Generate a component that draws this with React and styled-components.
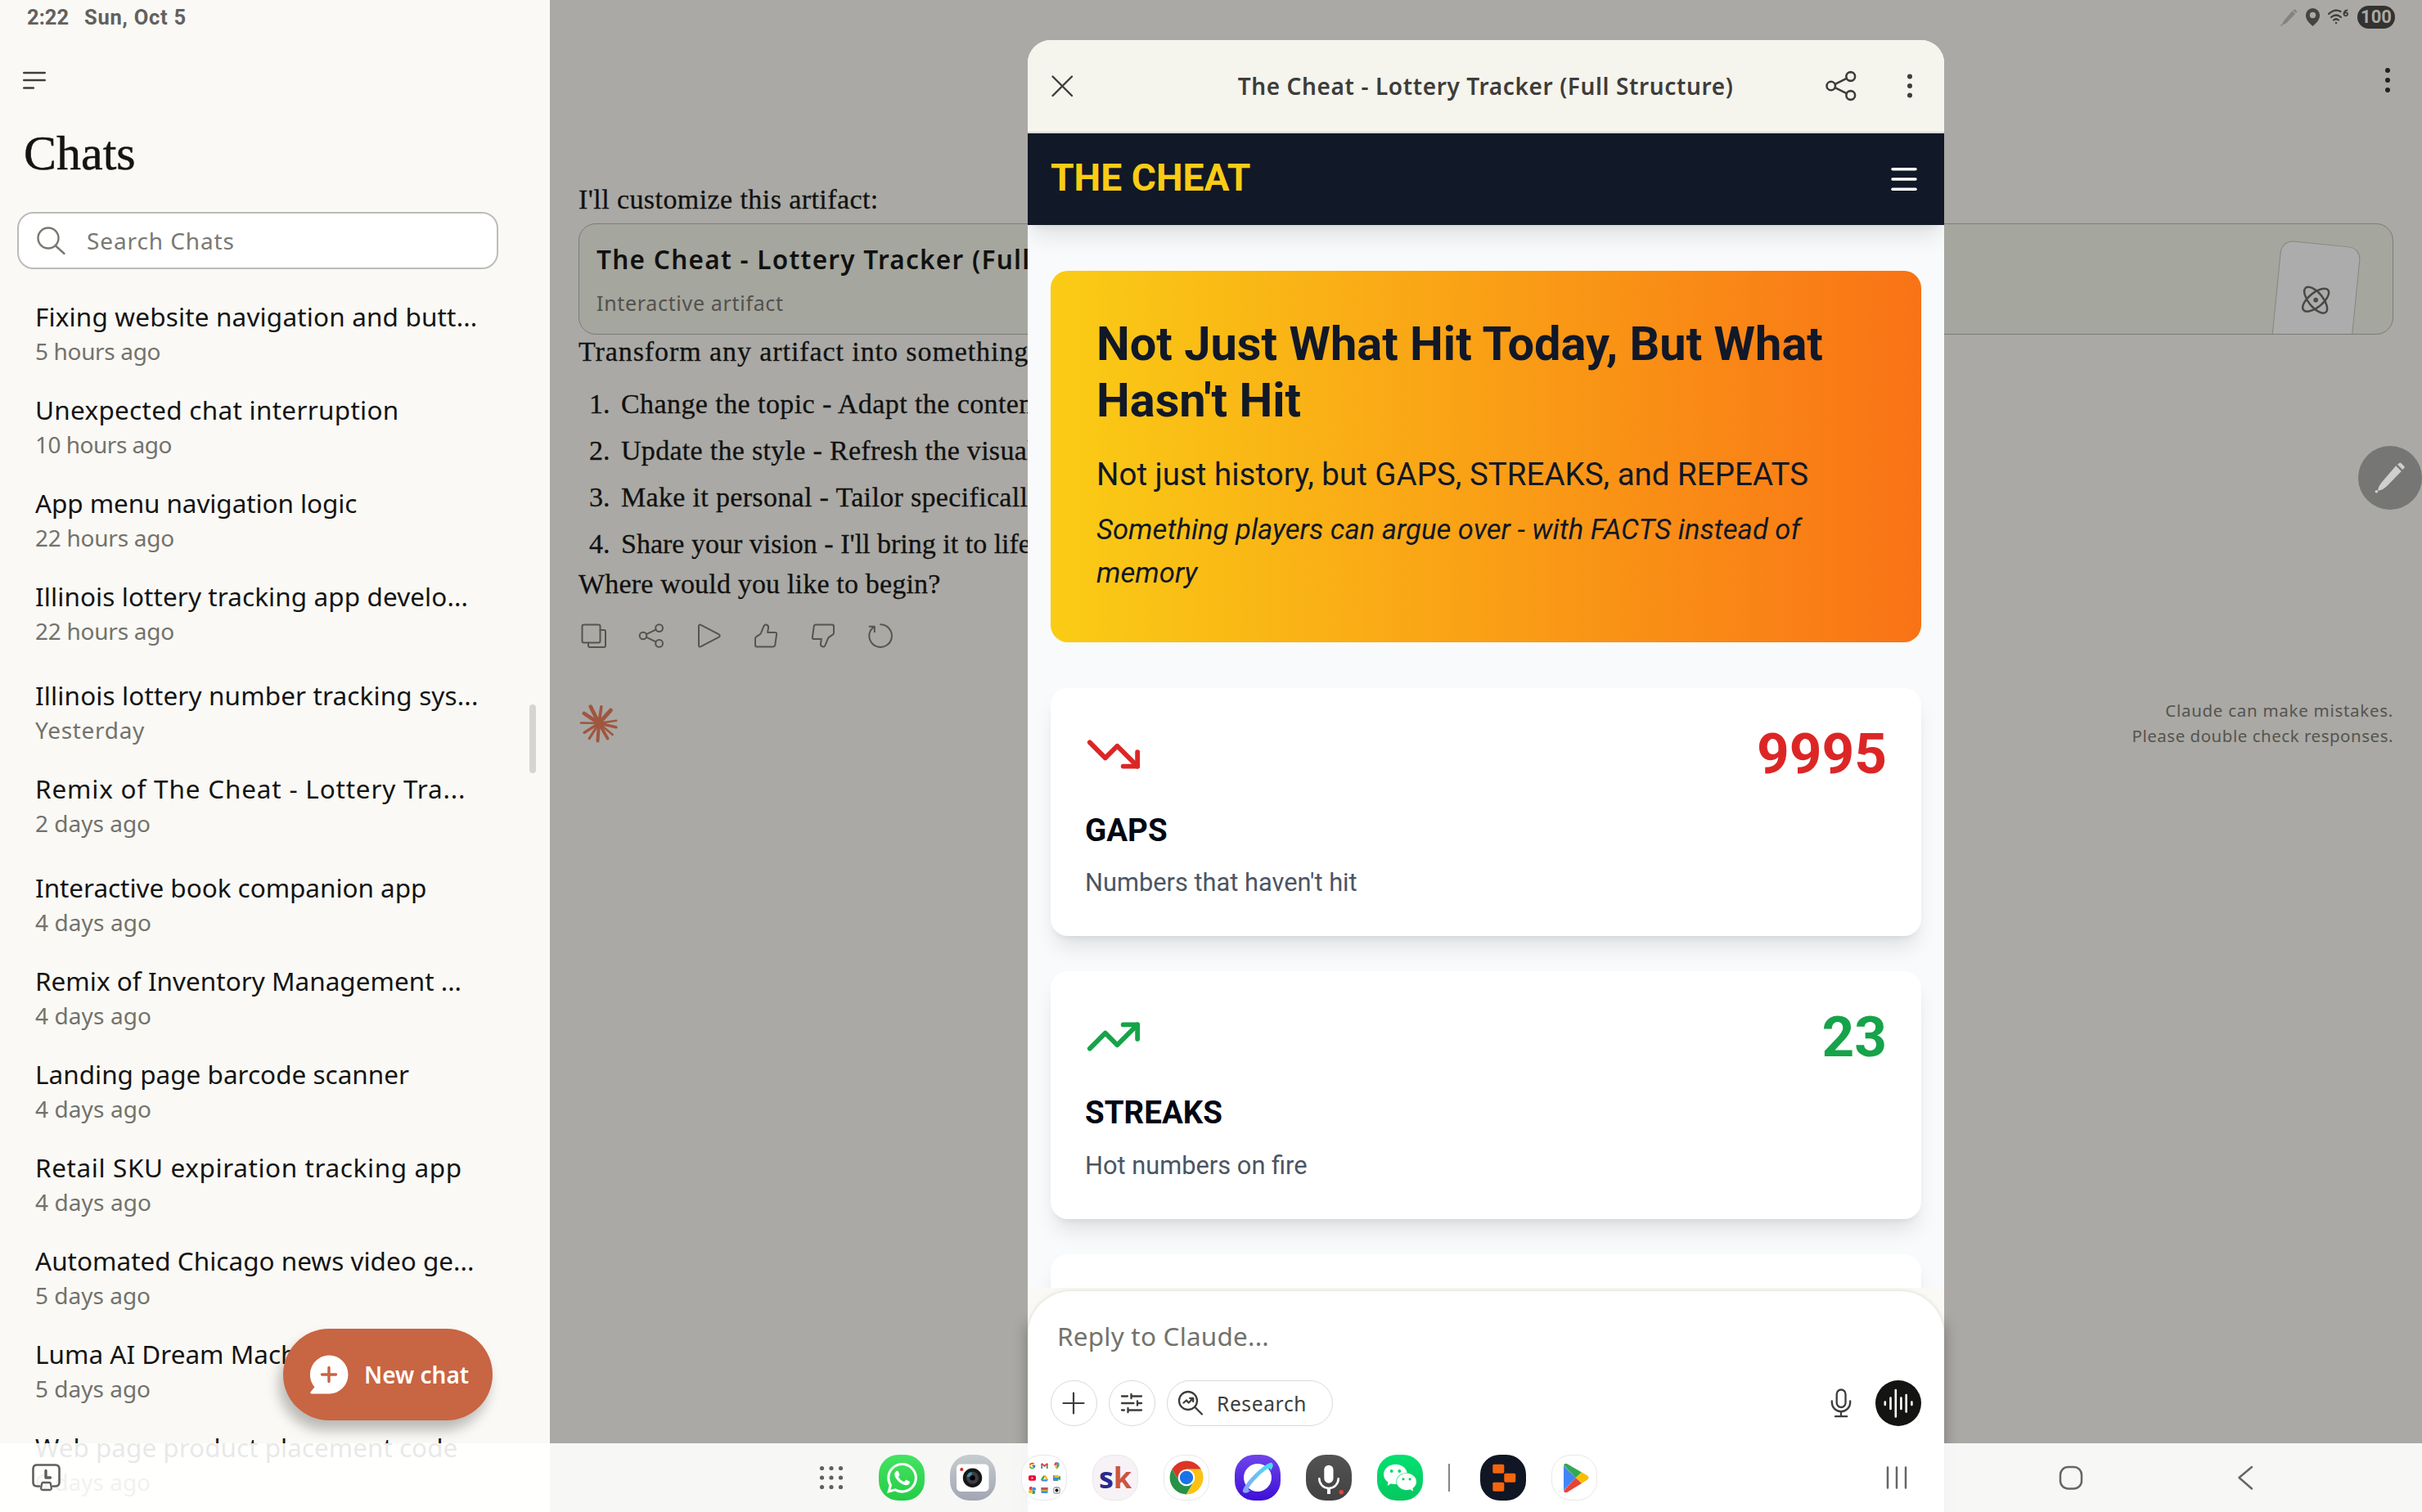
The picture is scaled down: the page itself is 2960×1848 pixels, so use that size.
import React from "react";
import styled, { createGlobalStyle, css } from "styled-components";
import { Menu, TrendingDown, TrendingUp, Atom } from "lucide-react";
import { SiWhatsapp, SiWechat } from "react-icons/si";
import { FcGoogle } from "react-icons/fc";

const sans = `"Noto Sans", "Open Sans", sans-serif`;
const serif = `"Liberation Serif", serif`;
const roboto = `Roboto, sans-serif`;

const GlobalStyle = createGlobalStyle`
  * { box-sizing: border-box; }
  body { margin: 0; background: #aaa9a5; }
  p, h1, h2, h3, ol { margin: 0; padding: 0; font-weight: inherit; }
  svg { display: block; flex: none; }
`;

const tracked = css`
  letter-spacing: ${(p) => p.$track || 0}px;
`;

const Screen = styled.div`
  position: relative;
  display: flex;
  width: 2960px;
  height: 1848px;
  overflow: hidden;
  font-family: ${sans};
  white-space: nowrap;
`;

/* ---------- status bar ---------- */
const StatusBar = styled.div`
  position: absolute;
  inset: 0 0 auto 0;
  height: 42px;
  display: flex;
  align-items: center;
  padding: 0 33px;
`;
const Clock = styled.span`
  font: 700 25.5px/42px ${roboto};
  color: #62615e;
  margin-right: 19px;
  ${tracked}
`;
const StatusIcons = styled.div`
  margin-left: auto;
  display: flex;
  align-items: center;
  gap: 10px;
`;
const Battery = styled.span`
  width: 46px;
  height: 28px;
  border-radius: 14px;
  background: #333230;
  color: #aaa9a5;
  font: 700 22px/28px ${roboto};
  text-align: center;
`;

/* ---------- sidebar ---------- */
const Sidebar = styled.aside`
  position: relative;
  width: 672px;
  height: 1848px;
  padding: 80px 0 0 21px;
  background: #faf9f5;
  overflow: hidden;
  flex: none;
`;
const MenuButton = styled.div`
  height: 36px;
  padding-left: 6px;
`;
const SidebarTitle = styled.h1`
  margin: 36px 0 37px 8px;
  font: 400 60px/70px ${serif};
  color: #141413;
  -webkit-text-stroke: 0.5px #141413;
`;
const SearchBox = styled.div`
  display: flex;
  align-items: center;
  width: 588px;
  height: 70px;
  padding-left: 22px;
  border: 2px solid #bdbcba;
  border-radius: 20px;
  background: #fff;
  color: #7a7872;
  font-size: 28px;
  letter-spacing: 0.9px;
  gap: 25px;
`;
const ChatList = styled.div`
  margin: 36px 0 0 22px;
`;
const ChatRow = styled.div`
  height: 114px;
  margin-bottom: ${(p) => (p.$gap ? 7 : 0)}px;
`;
const ChatName = styled.div`
  font-size: 31.5px;
  line-height: 44px;
  color: #141413;
  ${tracked}
`;
const ChatTime = styled.div`
  margin-top: 2px;
  font-size: 28px;
  line-height: 36px;
  color: #73726c;
  ${tracked}
`;
const ScrollThumb = styled.div`
  position: absolute;
  right: 17px;
  top: 861px;
  width: 8px;
  height: 84px;
  border-radius: 4px;
  background: #d5d5d2;
`;
const NewChat = styled.div`
  position: absolute;
  left: 346px;
  top: 1624px;
  width: 256px;
  height: 112px;
  border-radius: 56px;
  display: flex;
  align-items: center;
  padding-left: 31px;
  gap: 18px;
  background: #c86543;
  box-shadow: -5px 12px 16px rgba(0, 0, 0, 0.26);
  color: #fff;
  font-size: 28px;
  font-weight: 600;
`;

/* ---------- conversation ---------- */
const Conversation = styled.main`
  width: 2288px;
  height: 1848px;
  padding: 219px 35px 0 35px;
  background: #aaa9a5;
  color: #111110;
  font: 400 34px/44px ${serif};
  -webkit-text-stroke: 0.3px currentColor;
`;
const Paragraph = styled.p`
  line-height: ${(p) => p.$line || 44}px;
  ${tracked}
`;
const ArtifactCard = styled.div`
  display: flex;
  justify-content: space-between;
  height: 136px;
  margin: 3.5px 0 -1px;
  padding: 0 38px 0 21px;
  border: 1.5px solid #7c7c77;
  border-radius: 21px;
  background: #a5a69e;
  overflow: hidden;
  font-family: ${sans};
  -webkit-text-stroke: 0;
`;
const ArtifactText = styled.div`
  padding-top: 21.5px;
`;
const ArtifactName = styled.div`
  font-size: 31.5px;
  line-height: 44px;
  font-weight: 600;
  letter-spacing: 1.28px;
`;
const ArtifactKind = styled.div`
  margin-top: 14px;
  font-size: 25px;
  line-height: 34px;
  color: #52514c;
  letter-spacing: 0.68px;
`;
const ArtifactThumb = styled.div`
  display: flex;
  justify-content: center;
  width: 98px;
  height: 150px;
  margin-top: 24px;
  padding-top: 48px;
  border: 1.5px solid #85857f;
  border-radius: 15px;
  background: #acacac;
  color: #4a4945;
  transform: rotate(5.7deg);
  transform-origin: top center;
`;
const Steps = styled.ol`
  margin-top: 13px;
  list-style: none;
`;
const Step = styled.li`
  display: flex;
  line-height: 57.1px;
`;
const StepNumber = styled.span`
  width: 39px;
  margin-left: 13px;
`;
const StepText = styled.span`
  ${tracked}
`;
const Closing = styled(Paragraph)`
  padding-top: 1px;
`;
const Actions = styled.div`
  display: flex;
  gap: 34px;
  margin: 25.5px 0 0 0.5px;
  height: 36px;
`;
const FooterRow = styled.div`
  display: flex;
  justify-content: space-between;
  align-items: center;
  margin-top: 58px;
`;
const Disclaimer = styled.div`
  font: 400 20.5px/30.5px ${sans};
  color: #55544f;
  text-align: right;
  -webkit-text-stroke: 0;
`;
const DisclaimerLine = styled.div`
  ${tracked}
`;
const MoreDots = styled.div`
  position: absolute;
  left: 2902px;
  top: 80px;
`;
const PenBubble = styled.div`
  position: absolute;
  left: 2882px;
  top: 545px;
  width: 78px;
  height: 78px;
  border-radius: 50%;
  background: #767674;
  display: flex;
  align-items: center;
  justify-content: center;
`;

/* ---------- artifact sheet ---------- */
const Sheet = styled.section`
  position: absolute;
  left: 1256px;
  top: 49px;
  width: 1120px;
  height: 1799px;
  display: flex;
  flex-direction: column;
  border-radius: 28px 28px 0 0;
  overflow: hidden;
  background: #fff;
`;
const SheetShade = styled.div`
  position: absolute;
  left: 1256px;
  top: 1620px;
  width: 1120px;
  height: 300px;
  box-shadow: 0 0 16px 2px rgba(0, 0, 0, 0.24);
`;
const SheetHeader = styled.header`
  display: flex;
  align-items: center;
  height: 114px;
  padding: 0 26px 0 25px;
  background: #f5f4ed;
  border-bottom: 2px solid #d9dadb;
  flex: none;
`;
const SheetTitle = styled.h2`
  flex: 1;
  padding-left: 88px;
  text-align: center;
  font-size: 28px;
  font-weight: 600;
  line-height: 40px;
  letter-spacing: 0.62px;
  color: #3d3d3a;
`;
const SheetActions = styled.div`
  display: flex;
  align-items: center;
  gap: 46px;
`;
const WebView = styled.div`
  height: 1411px;
  background: #f9fafb;
  overflow: hidden;
  font-family: ${roboto};
  flex: none;
`;
const NavBar = styled.nav`
  position: relative;
  display: flex;
  align-items: center;
  justify-content: space-between;
  height: 112px;
  padding: 0 28px;
  background: #111827;
  color: #fff;
  box-shadow: 0 17.5px 26px -5px rgba(0, 0, 0, 0.1), 0 7px 10.5px -7px rgba(0, 0, 0, 0.1);
`;
const Brand = styled.span`
  font-size: 46.2px;
  font-weight: 700;
  line-height: 61px;
  padding-bottom: 3px;
  color: #facc15;
`;
const PageBody = styled.div`
  padding: 56px 28px;
`;
const Hero = styled.div`
  padding: 55px 56px 56.5px;
  border-radius: 21px;
  background: linear-gradient(to right, #facc15, #f97316);
  color: #111827;
  white-space: normal;
`;
const HeroTitle = styled.h1`
  font-size: 57.75px;
  line-height: 69.3px;
  font-weight: 700;
  margin-bottom: 28px;
`;
const HeroLead = styled.p`
  font-size: 38.5px;
  line-height: 53.9px;
  margin-bottom: 14px;
`;
const HeroNote = styled.p`
  font-size: 34.65px;
  line-height: 53.9px;
  font-style: italic;
`;
const StatGrid = styled.div`
  display: grid;
  gap: 42.5px;
  margin-top: 56.5px;
`;
const StatCard = styled.div`
  height: 303.1px;
  padding: 42px;
  border-radius: 21px;
  background: #fff;
  box-shadow: 0 17.5px 26px -5px rgba(0, 0, 0, 0.1), 0 7px 10.5px -7px rgba(0, 0, 0, 0.1);
`;
const StatTop = styled.div`
  display: flex;
  align-items: center;
  justify-content: space-between;
  margin-bottom: 27.5px;
  color: ${(p) => p.$color};
`;
const StatValue = styled.span`
  font-size: 69.3px;
  line-height: 77px;
  font-weight: 700;
`;
const StatName = styled.h3`
  font-size: 38.5px;
  line-height: 53.9px;
  font-weight: 700;
  color: #030712;
  margin-bottom: 14.5px;
`;
const StatNote = styled.p`
  font-size: 30.8px;
  line-height: 46.2px;
  color: #4b5563;
`;
const ComposerArea = styled.div`
  flex: 1;
  padding-top: 4px;
  background: #faf9f5;
`;
const Composer = styled.div`
  height: 100%;
  padding: 33px 28px 0;
  border-radius: 54px 54px 0 0;
  background: #fff;
  box-shadow: 0 0 5px rgba(90, 80, 50, 0.22);
`;
const Placeholder = styled.div`
  padding-left: 8px;
  margin-bottom: 32px;
  font-size: 31.5px;
  line-height: 44px;
  letter-spacing: 0.2px;
  color: #73726c;
`;
const ComposerTools = styled.div`
  display: flex;
  align-items: center;
  gap: 14.5px;
`;
const ToolButton = styled.div`
  display: flex;
  align-items: center;
  justify-content: ${(p) => (p.$wide ? "flex-start" : "center")};
  width: ${(p) => (p.$wide ? 203 : 56.5)}px;
  height: 56px;
  padding-left: ${(p) => (p.$wide ? 12 : 0)}px;
  gap: 16px;
  border: 1.3px solid #d9d9d7;
  border-radius: 28px;
  font-size: 24.5px;
  letter-spacing: 0.65px;
  color: #3d3d3a;
`;
const VoiceGroup = styled.div`
  margin-left: auto;
  display: flex;
  align-items: center;
  gap: 26px;
`;
const VoiceButton = styled.div`
  width: 56px;
  height: 56px;
  border-radius: 50%;
  background: #141413;
`;

/* ---------- taskbar ---------- */
const Taskbar = styled.div`
  position: absolute;
  inset: 1764px 0 auto 0;
  height: 84px;
  display: flex;
  align-items: center;
  padding-left: 38px;
  background: rgba(255, 255, 255, 0.9);
`;
const Dock = styled.div`
  display: flex;
  align-items: center;
  gap: 31px;
  width: 955px;
  margin-left: 924px;
`;
const DotsSlot = styled.div`
  width: 32px;
  margin-right: 11px;
`;
const DockDivider = styled.div`
  width: 2px;
  height: 34px;
  margin-right: 6px;
  background: #858585;
`;
const AppTile = styled.div`
  display: flex;
  align-items: center;
  justify-content: center;
  width: 56px;
  height: 56px;
  border-radius: 24px;
  background: ${(p) => p.$bg};
  color: #fff;
  overflow: hidden;
  flex: none;
  ${(p) =>
    p.$outlined &&
    css`
      border: 1px solid #e8e8ea;
    `}
`;
const FolderGrid = styled.div`
  display: grid;
  grid-template-columns: repeat(3, 9px);
  gap: 6px;
`;
const Sk = styled.span`
  font: 700 36px/56px "Open Sans", sans-serif;
  color: ${(p) => p.$color};
`;
const NavKeys = styled.div`
  display: flex;
  align-items: center;
  gap: 177px;
  margin-left: 345px;
  flex: none;
`;

/* ---------- icons ---------- */
const Stroke = ({ w, h = w, sw = 2, color = "currentColor", vb, children }) => (
  <svg width={w} height={h} viewBox={vb || `0 0 ${w} ${h}`} fill="none" stroke={color} strokeWidth={sw} strokeLinecap="round" strokeLinejoin="round">
    {children}
  </svg>
);
const VDots = ({ color, r = 3.2, gap = 12 }) => (
  <svg width="32" height="36" viewBox="0 0 32 36" fill={color}>
    <circle cx="16" cy={18 - gap} r={r} />
    <circle cx="16" cy="18" r={r} />
    <circle cx="16" cy={18 + gap} r={r} />
  </svg>
);
const ShareIcon = ({ size = 36, sw = 2, color }) => (
  <Stroke w={size} vb="0 0 36 36" sw={sw} color={color}>
    <circle cx="8" cy="18" r="4.3" />
    <circle cx="27.6" cy="8.6" r="4.4" />
    <circle cx="27.6" cy="27.4" r="4.4" />
    <path d="M12 16.2l11.5-5.6M12 19.8l11.5 5.6" />
  </Stroke>
);
const Thumb = ({ down }) => (
  <Stroke w={36} color="#55544f">
    <path
      transform={down ? "rotate(180 18 18)" : undefined}
      d="M5 21.5q0-1.5 1.2-2.2l4.4-2.9q1-.7 1.5-1.8l3.1-7.8q1-2.6 3.2-2.2 3.2.7 2.6 4l-.9 5.3h9q2.3 0 2 2.3l-1.8 13q-.3 2.2-2.5 2.2H7.2Q5 31.4 5 29.2z"
    />
  </Stroke>
);
const PenIcon = ({ w, color }) => (
  <svg width={w} height={w} viewBox="0 0 40 40" fill={color}>
    <path d="M27.5 4.5l7 7L15 31.5q-4 3.8-9.5 5-1.5 0-1.2-1.3 1.5-5.5 4.7-9.2z" />
    <path d="M29.5 3l2.3-2q1.2-1 2.5.2l3.7 3.7q1.2 1.2.2 2.4L36 9.6z" />
    <circle cx="2.5" cy="37.7" r="1.9" />
  </svg>
);
const Burst = () => {
  const rays = [
    [-10.7, -21.2, 4.6], [3, -21, 3.6], [15, -16.5, 5], [22, -3.3, 2.6], [22, 5, 3.4], [17.4, 14.6, 2.6],
    [11, 19.4, 3.8], [-1.6, 22.4, 4], [-12.3, 19.4, 3], [-18.6, 11.8, 3.4], [-23, -0.5, 2.4], [-19, -12.6, 4.6],
  ];
  return (
    <svg width="50" height="50" viewBox="-25 -25 50 50" stroke="#a0563f" strokeLinecap="round">
      {rays.map(([x, y, s]) => (
        <line key={`${x}:${y}`} x1="0" y1="0" x2={x * 0.96} y2={y * 0.96} strokeWidth={s} />
      ))}
    </svg>
  );
};

const chats = [
  { name: "Fixing website navigation and butt...", time: "5 hours ago", track: 0.15, timeTrack: -0.35 },
  { name: "Unexpected chat interruption", time: "10 hours ago", track: 0.28, timeTrack: -0.5 },
  { name: "App menu navigation logic", time: "22 hours ago", track: -0.1, timeTrack: -0.25 },
  { name: "Illinois lottery tracking app develo...", time: "22 hours ago", track: 0.08, timeTrack: -0.25, gap: true },
  { name: "Illinois lottery number tracking sys...", time: "Yesterday", track: 0.12, timeTrack: 0.7 },
  { name: "Remix of The Cheat - Lottery Tra...", time: "2 days ago", track: 0.8, gap: true },
  { name: "Interactive book companion app", time: "4 days ago", track: -0.05, timeTrack: 0.1 },
  { name: "Remix of Inventory Management ...", time: "4 days ago", timeTrack: 0.1 },
  { name: "Landing page barcode scanner", time: "4 days ago", timeTrack: 0.1 },
  { name: "Retail SKU expiration tracking app", time: "4 days ago", track: 0.6, timeTrack: 0.1 },
  { name: "Automated Chicago news video ge...", time: "5 days ago" },
  { name: "Luma AI Dream Machine", time: "5 days ago" },
  { name: "Web page product placement code", time: "6 days ago" },
];
const steps = [
  { text: "Change the topic - Adapt the content for your needs", track: 0.42 },
  { text: "Update the style - Refresh the visuals and feel", track: 0.3 },
  { text: "Make it personal - Tailor specifically for you", track: 0.33 },
  { text: "Share your vision - I'll bring it to life", track: 0 },
];

export default function App() {
  return (
    <>
      <GlobalStyle />
      <Screen>
        <Sidebar>
          <MenuButton>
            <Stroke w={34} h={36} sw={2.6} color="#3d3d3a">
              <path d="M2.3 9h25.4M2.3 18h25.4M2.3 27.5h11.5" />
            </Stroke>
          </MenuButton>
          <SidebarTitle>Chats</SidebarTitle>
          <SearchBox>
            <Stroke w={36} h={36} sw={2.4}>
              <circle cx="14" cy="15" r="12.5" />
              <path d="M23 24.5l10.5 9.5" />
            </Stroke>
            <span>Search Chats</span>
          </SearchBox>
          <ChatList>
            {chats.map((c) => (
              <ChatRow key={c.name} $gap={c.gap}>
                <ChatName $track={c.track}>{c.name}</ChatName>
                <ChatTime $track={c.timeTrack}>{c.time}</ChatTime>
              </ChatRow>
            ))}
          </ChatList>
          <ScrollThumb />
          <NewChat>
            <svg width="50" height="50" viewBox="0 0 50 50">
              <path d="M25.5 1.5a23 23.5 0 0 1 0 47H4q-3-.3-1-2.8l4.5-5.5A23.5 23.5 0 0 1 25.5 1.5z" fill="#fff" />
              <path d="M25 16.5v17M16.5 25h17" stroke="#c86543" strokeWidth="3.4" strokeLinecap="round" />
            </svg>
            <span>New chat</span>
          </NewChat>
        </Sidebar>

        <Conversation>
          <Paragraph $line={50} $track={0.42}>I'll customize this artifact:</Paragraph>
          <ArtifactCard>
            <ArtifactText>
              <ArtifactName>The Cheat - Lottery Tracker (Full Structure)</ArtifactName>
              <ArtifactKind>Interactive artifact</ArtifactKind>
            </ArtifactText>
            <ArtifactThumb>
              <Atom size={40} strokeWidth={1.5} />
            </ArtifactThumb>
          </ArtifactCard>
          <Paragraph $track={0.92}>Transform any artifact into something uniquely yours.</Paragraph>
          <Steps>
            {steps.map((s, i) => (
              <Step key={s.text}>
                <StepNumber>{i + 1}.</StepNumber>
                <StepText $track={s.track}>{s.text}</StepText>
              </Step>
            ))}
          </Steps>
          <Closing $line={40} $track={0.18}>Where would you like to begin?</Closing>
          <Actions>
            <Stroke w={36} color="#55544f">
              <rect x="3.5" y="4.5" width="22" height="22" rx="2" />
              <path d="M25.5 11h4.5a2 2 0 0 1 2 2v17a2 2 0 0 1-2 2h-17a2 2 0 0 1-2-2v-3.4" />
            </Stroke>
            <ShareIcon color="#55544f" />
            <Stroke w={36} color="#55544f">
              <path d="M6 6.5q0-3 2.7-1.7l21.5 11.4q3 1.8 0 3.6L8.7 31.2Q6 32.5 6 29.5z" />
            </Stroke>
            <Thumb />
            <Thumb down />
            <Stroke w={36} color="#55544f">
              <path d="M18.3 4.3A13.8 13.8 0 1 1 6 11.5Q7.5 9 10.7 6.9M4.6 6.7h6.2v6.6" />
            </Stroke>
          </Actions>
          <FooterRow>
            <Burst />
            <Disclaimer>
              <DisclaimerLine $track={0.72}>Claude can make mistakes.</DisclaimerLine>
              <DisclaimerLine $track={0.52}>Please double check responses.</DisclaimerLine>
            </Disclaimer>
          </FooterRow>
        </Conversation>

        <MoreDots>
          <VDots color="#222220" r={3} />
        </MoreDots>
        <PenBubble>
          <PenIcon w={38} color="#cfcfcd" />
        </PenBubble>

        <StatusBar>
          <Clock>2:22</Clock>
          <Clock $track={0.75}>Sun, Oct 5</Clock>
          <StatusIcons>
            <PenIcon w={21} color="#84837f" />
            <svg width="17" height="23" viewBox="0 0 17 23">
              <path d="M8.5 0a8.5 8.5 0 0 1 8.5 9c0 5-4 9-8.5 13C4 18 0 14 0 9a8.5 8.5 0 0 1 8.5-9z" fill="#444441" />
              <circle cx="8.5" cy="8.5" r="3.7" fill="#aaa9a5" />
            </svg>
            <svg width="26" height="20" viewBox="0 0 26 20" fill="none" stroke="#3d3d3a" strokeWidth="2.2" strokeLinecap="round">
              <path d="M1 6Q8.5-1 15.5 3M4 10Q10 5 16 10M7 13.5q3-2.5 6 0" />
              <circle cx="10" cy="17" r="1.2" fill="#3d3d3a" stroke="none" />
              <path d="M23.5 1.5q-4.5 1-4 5.2 2 3 4.3.6 1-2.6-1.3-3-1.8 0-2.6 1.4" strokeWidth="1.8" />
            </svg>
            <Battery>100</Battery>
          </StatusIcons>
        </StatusBar>

        <SheetShade />
        <Sheet>
          <SheetHeader>
            <Stroke w={34} sw={2.4} color="#3d3d3a">
              <path d="M5.5 5.5l23.5 23.5M29 5.5L5.5 29" />
            </Stroke>
            <SheetTitle>The Cheat - Lottery Tracker (Full Structure)</SheetTitle>
            <SheetActions>
              <ShareIcon size={44} sw={2.1} color="#3d3d3a" />
              <VDots color="#3d3d3a" r={3} gap={11.5} />
            </SheetActions>
          </SheetHeader>
          <WebView>
            <NavBar>
              <Brand>THE CHEAT</Brand>
              <Menu size={42} />
            </NavBar>
            <PageBody>
              <Hero>
                <HeroTitle>Not Just What Hit Today, But What Hasn't Hit</HeroTitle>
                <HeroLead>Not just history, but GAPS, STREAKS, and REPEATS</HeroLead>
                <HeroNote>Something players can argue over - with FACTS instead of memory</HeroNote>
              </Hero>
              <StatGrid>
                <StatCard>
                  <StatTop $color="#dc2626">
                    <TrendingDown size={70} />
                    <StatValue>9995</StatValue>
                  </StatTop>
                  <StatName>GAPS</StatName>
                  <StatNote>Numbers that haven't hit</StatNote>
                </StatCard>
                <StatCard>
                  <StatTop $color="#16a34a">
                    <TrendingUp size={70} />
                    <StatValue>23</StatValue>
                  </StatTop>
                  <StatName>STREAKS</StatName>
                  <StatNote>Hot numbers on fire</StatNote>
                </StatCard>
                <StatCard />
              </StatGrid>
            </PageBody>
          </WebView>
          <ComposerArea>
            <Composer>
              <Placeholder>Reply to Claude...</Placeholder>
              <ComposerTools>
                <ToolButton>
                  <Stroke w={30} sw={2.2}>
                    <path d="M15 2.5v25M2.5 15h25" />
                  </Stroke>
                </ToolButton>
                <ToolButton>
                  <Stroke w={30} sw={2.3}>
                    <path d="M3 6.5h7M14.5 3.8v5.4M14.5 6.5h12.5M3 15h14.5M22 12.3v5.4M22 15h5M3 23.5h3M10.5 20.8v5.4M10.5 23.5h16.5" />
                  </Stroke>
                </ToolButton>
                <ToolButton $wide>
                  <Stroke w={32} sw={2.3}>
                    <circle cx="13" cy="13" r="11" />
                    <path d="M21.5 21l8.5 8.5M7.5 15.5l3.5-3 2.7 3L19 10.3M15.3 10h3.9v3.9" />
                  </Stroke>
                  <span>Research</span>
                </ToolButton>
                <VoiceGroup>
                  <Stroke w={32} h={40} sw={2.3} color="#3d3d3a">
                    <rect x="10.7" y="3.5" width="10.8" height="21.5" rx="5.4" />
                    <path d="M4.8 17.5v1.5a11.2 11.2 0 0 0 22.4 0v-1.5M16 30.5v5.5M9 36.2h14.2" />
                  </Stroke>
                  <VoiceButton>
                    <Stroke w={56} sw={2.6} color="#fff">
                      <path d="M11.8 26.5v3.5M18.5 21.5v13.5M24.8 12v32.5M31.4 21.5v13.5M37.7 18v20.5M44.4 26.5v3.5" />
                    </Stroke>
                  </VoiceButton>
                </VoiceGroup>
              </ComposerTools>
            </Composer>
          </ComposerArea>
        </Sheet>

        <Taskbar>
          <Stroke w={38} h={36} sw={2.6} color="#5f5f5f">
            <path d="M10.5 28.5H7q-4.5-.3-4.5-4.5V7q.3-4.5 4.5-4.5h23q4.5.3 4.5 4.5v17q-.3 4.5-4.5 4.5h-3.5" />
            <path d="M18 9.5v8.5h5.5" strokeWidth="3.4" />
            <path d="M13 26q.2-2 2-2h7q1.8 0 2 2l.8 4.5q.2 2.5-2 2.5h-8.6q-2.2 0-2-2.5z" strokeWidth="2.3" />
          </Stroke>
          <Dock>
            <DotsSlot>
              <svg width="32" height="32" viewBox="0 0 32 32" fill="#5f5f5f">
                {[4.5, 16, 27.5].map((y) => [4.5, 16, 27.5].map((x) => <circle key={x + "-" + y} cx={x} cy={y} r="2.6" />))}
              </svg>
            </DotsSlot>
            <AppTile $bg="linear-gradient(#45e362, #25cc45)">
              <SiWhatsapp size={37} />
            </AppTile>
            <AppTile $bg="linear-gradient(#c6cdcf, #a2a5b4)">
              <svg width="56" height="56" viewBox="0 0 56 56">
                <rect x="8" y="11.5" width="39.5" height="33.5" rx="5" fill="#fff" />
                <circle cx="27.5" cy="28.3" r="11.7" fill="#17171a" />
                <circle cx="27.5" cy="28.3" r="7.5" fill="#3f3d42" />
                <path d="M20.5 27a7 7 0 0 1 6-6l.5 6z" fill="#3a8fa8" />
                <circle cx="27.5" cy="28.3" r="3.2" fill="#000" />
                <circle cx="14.3" cy="18" r="2.1" fill="#e02424" />
              </svg>
            </AppTile>
            <AppTile $bg="#fdfdff" $outlined>
              <FolderGrid>
                <FcGoogle size={9} />
                <svg width="9" height="9" viewBox="0 0 9 9" fill="none" strokeWidth="1.9">
                  <path d="M1.2 8V2" stroke="#4285f4" />
                  <path d="M7.8 8V2" stroke="#34a853" />
                  <path d="M.8 1.8l3.7 3 3.7-3" stroke="#ea4335" />
                </svg>
                <svg width="9" height="9" viewBox="0 0 9 9">
                  <path d="M4.5 9L2 5.5 4.5 3.5z" fill="#fbbc04" />
                  <path d="M4.5 9L7.5 4.5V1.5L4.5 4z" fill="#34a853" />
                  <path d="M1.5 4.5Q1 .2 4.5 0L5 3z" fill="#ea4335" />
                  <path d="M4.5 0q2 0 3 2L4.5 4z" fill="#4285f4" />
                </svg>
                <svg width="9" height="9" viewBox="0 0 9 9">
                  <rect y="1.2" width="9" height="6.6" rx="1.8" fill="#f00033" />
                  <path d="M3.6 3v3L6 4.5z" fill="#fff" />
                </svg>
                <svg width="9" height="9" viewBox="0 0 9 9">
                  <path d="M3.2 1L0 6.5 1.5 8.5 4.7 3.2z" fill="#34a853" />
                  <path d="M3.2 1h2.6L9 6.3H6.2z" fill="#fbbc04" />
                  <path d="M1.5 8.5L3 6.2h6L7.5 8.5z" fill="#4285f4" />
                </svg>
                <svg width="9" height="9" viewBox="0 0 9 9">
                  <rect y="1" width="6.5" height="7" rx="1" fill="#4285f4" />
                  <path d="M1.5 1h5v3h-5z" fill="#fbbc04" />
                  <path d="M6 4l3-2.5v6L6 5.5V8H2V6h4z" fill="#34a853" />
                </svg>
                <svg width="9" height="9" viewBox="0 0 9 9">
                  <path d="M4.5 0v4.5H2.2A2.3 2.3 0 0 1 4.5 0z" fill="#ea4335" />
                  <path d="M9 4.5H4.5V2.2A2.3 2.3 0 0 1 9 4.5z" fill="#4285f4" />
                  <path d="M4.5 9V4.5h2.3A2.3 2.3 0 0 1 4.5 9z" fill="#34a853" />
                  <path d="M0 4.5h4.5v2.3A2.3 2.3 0 0 1 0 4.5z" fill="#fbbc04" />
                </svg>
                <svg width="9" height="9" viewBox="0 0 9 9">
                  <rect x=".5" y="1" width="8" height="7" rx=".8" fill="#4285f4" />
                  <path d="M.5 1h8v1.7h-8z" fill="#ea4335" />
                  <path d="M.5 2.7h8v1.5h-8z" fill="#34a853" />
                  <path d="M.5 4.2h8v1.2h-8z" fill="#fbbc04" />
                </svg>
                <svg width="9" height="9" viewBox="0 0 9 9">
                  <rect width="9" height="9" rx="3.5" fill="#a9acb6" />
                  <rect x="1.5" y="2" width="6" height="5.3" rx="1" fill="#fff" />
                  <circle cx="4.5" cy="4.6" r="2" fill="#111" />
                </svg>
              </FolderGrid>
            </AppTile>
            <AppTile $bg="#f7f2f6" $outlined>
              <Sk $color="#2a2a8c">s</Sk>
              <Sk $color="#cb5540">k</Sk>
            </AppTile>
            <AppTile $bg="#fff" $outlined>
              <svg width="56" height="56" viewBox="0 0 56 56">
                <path d="M10.4 17.6A20.5 20.5 0 0 1 45.8 17.75H28L19.3 33z" fill="#dc3527" />
                <path d="M45.8 17.75A20.5 20.5 0 0 1 27.7 48.4L36.7 33 28 17.75z" fill="#fcc113" />
                <path d="M27.7 48.4A20.5 20.5 0 0 1 10.4 17.6L19.3 33H36.7z" fill="#279247" />
                <circle cx="28" cy="28" r="10.3" fill="#fff" />
                <circle cx="28" cy="28" r="8.2" fill="#1a73e8" />
              </svg>
            </AppTile>
            <AppTile $bg="linear-gradient(#6f45ea, #3d0fd6)">
              <svg width="56" height="56" viewBox="0 0 56 56">
                <defs>
                  <linearGradient id="ring" x1="0" x2="1">
                    <stop offset="0" stopColor="#8aa0ff" />
                    <stop offset="1" stopColor="#45e0f2" />
                  </linearGradient>
                </defs>
                <circle cx="28" cy="28" r="17" fill="#fff" />
                <g transform="rotate(-45 28 28)">
                  <path d="M3 28C3 21 53 21 53 28C53 31 49 33 45 33C48.5 30.5 46 27.5 28 27.5C10 27.5 7.5 30.5 11 33C7 33 3 31 3 28z" fill="url(#ring)" />
                </g>
              </svg>
            </AppTile>
            <AppTile $bg="linear-gradient(#535353, #424242)">
              <svg width="56" height="56" viewBox="0 0 56 56">
                <rect x="22.3" y="12.7" width="11.2" height="22" rx="5.6" fill="#fff" />
                <path d="M16.3 29.3a11.7 11.7 0 0 0 23.4 0" fill="none" stroke="#fff" strokeWidth="2.6" strokeLinecap="round" />
                <path d="M28 41v7" stroke="#fff" strokeWidth="4" />
                <circle cx="43.2" cy="45.7" r="2.7" fill="#e8453c" />
              </svg>
            </AppTile>
            <AppTile $bg="linear-gradient(#02e170, #06c75f)">
              <SiWechat size={40} />
            </AppTile>
            <DockDivider />
            <AppTile $bg="#101624">
              <svg width="56" height="56" viewBox="0 0 56 56" fill="#f5650d">
                <rect x="15.3" y="11.7" width="14" height="11" rx="1.6" />
                <rect x="29.3" y="22.7" width="14" height="11" rx="1.6" />
                <rect x="15.3" y="33.7" width="14" height="11" rx="1.6" />
              </svg>
            </AppTile>
            <AppTile $bg="#fff" $outlined>
              <svg width="56" height="56" viewBox="0 0 56 56">
                <path d="M15 13.5L29.8 28.3 15 43.5z" fill="#4285f4" />
                <path d="M15 13q1-3.5 4.5-1.8L37 21.5l-7.2 6.8z" fill="#34a853" />
                <path d="M37 21.3l7 4.2q3 2.5 0 5l-7 4.5-7.2-6.7z" fill="#fbbc04" />
                <path d="M15 44q1 3.5 4.5 1.8L37 35l-7.2-6.7z" fill="#ea4335" />
              </svg>
            </AppTile>
          </Dock>
          <NavKeys>
            <Stroke w={36} sw={2.5} color="#666665">
              <path d="M7 5.5v25M18 5.5v25M29 5.5v25" />
            </Stroke>
            <Stroke w={36} sw={2.5} color="#666665">
              <rect x="5" y="5" width="26" height="26.5" rx="9.5" />
            </Stroke>
            <Stroke w={36} sw={2.5} color="#666665">
              <path d="M26 5L10.5 18 26 31.5" />
            </Stroke>
          </NavKeys>
        </Taskbar>
      </Screen>
    </>
  );
}
